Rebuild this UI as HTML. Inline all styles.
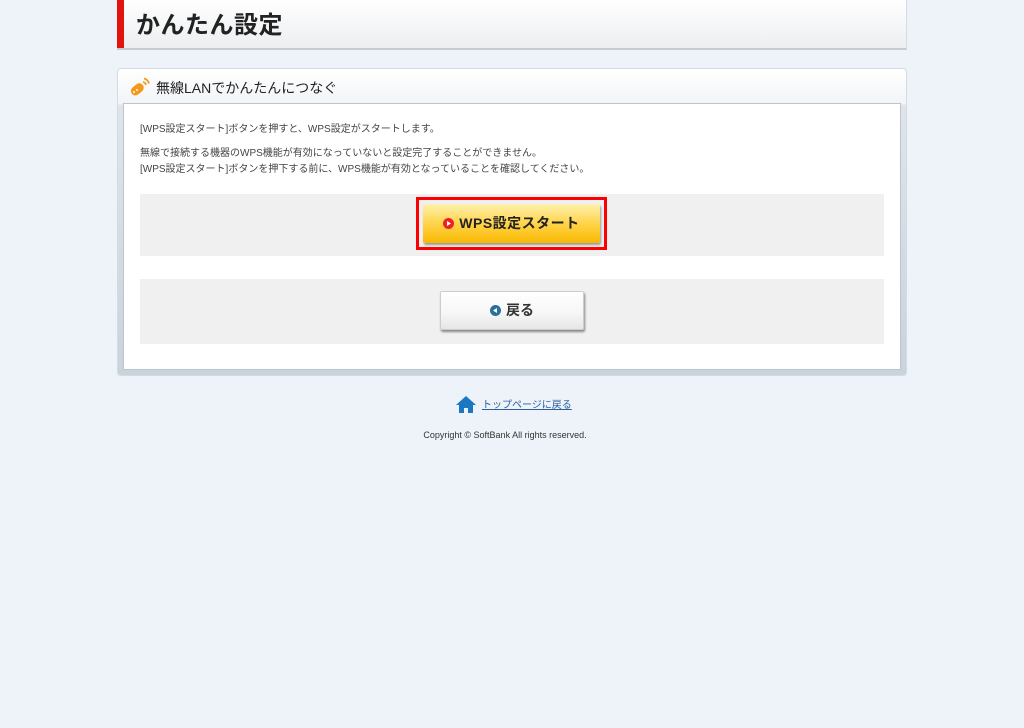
<!DOCTYPE html>
<html><head><meta charset="utf-8"><style>
*{margin:0;padding:0;box-sizing:border-box}
body{width:1024px;height:728px;background:#eef3fa;font-family:"Liberation Sans","Noto Sans CJK JP",sans-serif;position:relative;overflow:hidden;color:#333}
.hdr{position:absolute;left:117px;top:0;width:790px;height:50px;background:linear-gradient(#fff,#eceef0);border-bottom:2px solid #c8ccd0;border-right:1px solid #d8dce0}
.hdr .red{position:absolute;left:0;top:0;width:7px;height:48px;background:#e3140d}
.hdr h1{position:absolute;left:19px;top:5px;font-size:24px;font-weight:bold;color:#222;letter-spacing:0.5px}
.panel{position:absolute;left:117px;top:68px;width:790px;height:308px;border:1px solid #d3dae2;border-radius:4px;background:linear-gradient(#fff 0,#f2f4f6 35px,#dfe5ea 36px,#c9d3dc 100%)}
.panel .ttl{position:absolute;left:38px;top:9px;font-size:14px;color:#222}
.inner{position:absolute;left:5px;top:34px;width:778px;height:267px;background:#fff;border:1px solid #bcc4cc}
.txt{position:absolute;left:16px;font-size:10px;color:#444;white-space:nowrap}
.gb{position:absolute;left:16px;width:744px;background:#f0f0f0}
.wpsb{position:absolute;left:292px;top:93px;width:191px;height:53px;border:3px solid #f00}
.wps{position:absolute;left:4px;top:4px;width:177px;height:39px;border-radius:2px;background:linear-gradient(#fff1b0,#ffd44a 50%,#f9b800);box-shadow:1px 2px 2px #999;font-size:14px;font-weight:bold;color:#222;line-height:39px;text-align:center;letter-spacing:0.5px}
.dot{display:inline-block;width:11px;height:11px;border-radius:50%;vertical-align:-1px;margin-right:5px;position:relative}
.back{position:absolute;left:316px;top:187px;width:144px;height:39px;border-radius:2px;background:linear-gradient(#fff,#f6f6f6 60%,#e6e6e6);border:1px solid #ccc;box-shadow:1px 2px 2px #888;font-size:14px;font-weight:bold;color:#333;line-height:37px;text-align:center}
.foot{position:absolute;left:0;width:1024px;text-align:center}
</style></head><body>
<div class="hdr"><div class="red"></div><h1>かんたん設定</h1></div>
<div class="panel">
<svg style="position:absolute;left:10px;top:7px" width="24" height="24" viewBox="0 0 24 24"><rect x="2" y="9" width="14" height="9" rx="4.5" transform="rotate(-40 9 13)" fill="#f39a1e"/><circle cx="6" cy="16" r="1" fill="#fff"/><circle cx="9" cy="14" r="1" fill="#fff"/><path d="M15 6a4 4 0 0 1 3 3M16 2.5a7 7 0 0 1 5 5" stroke="#f39a1e" stroke-width="1.8" fill="none"/></svg>
<div class="ttl">無線LANでかんたんにつなぐ</div>
<div class="inner">
<div class="txt" style="top:16px">[WPS設定スタート]ボタンを押すと、WPS設定がスタートします。</div>
<div class="txt" style="top:40px">無線で接続する機器のWPS機能が有効になっていないと設定完了することができません。</div>
<div class="txt" style="top:56px">[WPS設定スタート]ボタンを押下する前に、WPS機能が有効となっていることを確認してください。</div>
<div class="gb" style="top:90px;height:62px"></div>
<div class="gb" style="top:175px;height:65px"></div>
<div class="wpsb"><div class="wps"><span class="dot" style="background:#e22"><svg style="position:absolute;left:0;top:0" width="11" height="11"><path d="M4 3l4 2.5-4 2.5z" fill="#fff"/></svg></span>WPS設定スタート</div></div>
<div class="back"><span class="dot" style="background:#2a6f9a"><svg style="position:absolute;left:0;top:0" width="11" height="11"><path d="M7 3L3 5.5 7 8z" fill="#fff"/></svg></span>戻る</div>
</div></div>
<svg style="position:absolute;left:456px;top:395px" width="20" height="18" viewBox="0 0 20 18"><path d="M10 1L0 10h3v8h5v-5h4v5h5v-8h3z" fill="#1a78c2"/></svg>
<div style="position:absolute;left:482px;top:396px;font-size:10px;color:#2a5fa0;text-decoration:underline">トップページに戻る</div>
<div class="foot" style="top:430px;font-size:9px;color:#333;left:-7px">Copyright © SoftBank All rights reserved.</div>
</body></html>
